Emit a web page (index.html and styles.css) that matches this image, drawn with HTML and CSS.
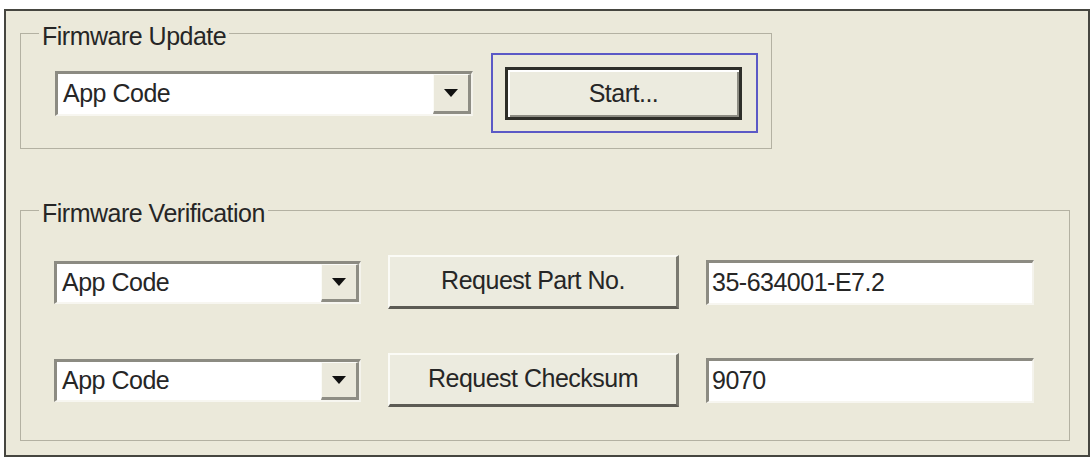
FILE: index.html
```html
<!DOCTYPE html>
<html lang="en">
  <head>
    <meta charset="UTF-8" />
    <meta name="viewport" content="width=device-width, initial-scale=1.0" />
    <title>Firmware</title>
    <link rel="stylesheet" href="styles.css">
  </head>
  <body>
    <div class="window">
      <fieldset class="group group-update">
        <legend>Firmware Update</legend>
        <div class="update-row">
          <div class="combo combo-wide">
            <span class="combo-value">App Code</span>
            <span class="combo-drop">
              <svg width="14" height="8" viewBox="0 0 14 8"><path d="M0 0h14L7 8z" fill="#111"/></svg>
            </span>
          </div>
          <div class="focus-ring">
            <button type="button" class="btn btn-default">Start...</button>
          </div>
        </div>
      </fieldset>

      <fieldset class="group group-verify">
        <legend>Firmware Verification</legend>
        <div class="verify-rows">
          <div class="verify-row">
            <div class="combo combo-small">
              <span class="combo-value">App Code</span>
              <span class="combo-drop">
                <svg width="14" height="8" viewBox="0 0 14 8"><path d="M0 0h14L7 8z" fill="#111"/></svg>
              </span>
            </div>
            <button type="button" class="btn btn-request">Request Part No.</button>
            <div class="field">35-634001-E7.2</div>
          </div>
          <div class="verify-row">
            <div class="combo combo-small">
              <span class="combo-value">App Code</span>
              <span class="combo-drop">
                <svg width="14" height="8" viewBox="0 0 14 8"><path d="M0 0h14L7 8z" fill="#111"/></svg>
              </span>
            </div>
            <button type="button" class="btn btn-request">Request Checksum</button>
            <div class="field">9070</div>
          </div>
        </div>
      </fieldset>
    </div>
  </body>
</html>
```

FILE: styles.css
```css
body {
  margin: 0;
  background-color: #ffffff;
  font-family: "Liberation Sans", Arial, sans-serif;
  font-size: 25px;
  letter-spacing: -0.5px;
  color: #262626;
}

.window {
  box-sizing: border-box;
  width: 1086px;
  height: 448px;
  margin: 9px 0 0 4px;
  border: 2px solid #464640;
  background-color: #ebe9da;
  overflow: hidden;
}

/* group boxes */
.group {
  margin: 0;
  padding: 0;
  min-width: 0;
  border: 1px solid #b3b1a2;
}

.group legend {
  margin-left: 18px;
  padding: 6px 3px 0 3px;
  line-height: 28px;
}

.group-update {
  box-sizing: border-box;
  width: 752px;
  margin: 5px 0 0 14px;
}

.group-verify {
  margin: 44px 18px 0 14px;
}

.update-row {
  display: flex;
  align-items: center;
  padding: 3px 0 15px 34px;
}

.verify-rows {
  display: flex;
  flex-direction: column;
  gap: 44px;
  padding: 28px 0 33px 33px;
}

.verify-row {
  display: flex;
  align-items: center;
  gap: 27px;
}

/* combo box */
.combo {
  box-sizing: border-box;
  display: flex;
  align-items: stretch;
  background-color: #ffffff;
  border-style: solid;
  border-width: 3px 2px 2px 3px;
  border-color: #8c8b82 #f4f3ec #f7f6f0 #8c8b82;
}

.combo-wide {
  width: 418px;
  height: 45px;
}

.combo-small {
  width: 307px;
  height: 43px;
}

.combo-value {
  flex: 1;
  display: flex;
  align-items: center;
  padding-left: 5px;
}

.combo-drop {
  box-sizing: border-box;
  width: 38px;
  display: flex;
  align-items: center;
  justify-content: center;
  background-color: #ebe9dc;
  border-style: solid;
  border-width: 1px 3px 3px 1px;
  border-color: #fbfbf7 #8e8d84 #8e8d84 #fbfbf7;
}

/* buttons */
.btn {
  box-sizing: border-box;
  font-family: "Liberation Sans", Arial, sans-serif;
  font-size: 25px;
  letter-spacing: -0.5px;
  color: #262626;
  background-color: #ecebdf;
  border-style: solid;
  border-width: 2px 3px 3px 2px;
  border-color: #fbfbf6 #7a7970 #5c5b54 #fbfbf6;
  padding: 0;
  cursor: pointer;
}

.btn-request {
  width: 291px;
  height: 54px;
  padding-bottom: 2px;
}

.focus-ring {
  box-sizing: border-box;
  width: 267px;
  height: 80px;
  margin-left: 18px;
  padding-left: 12px;
  display: flex;
  align-items: center;
  border: 2px solid #5b59c6;
}

.btn-default {
  width: 237px;
  height: 53px;
  border: 3px solid #2e2e29;
  box-shadow: inset 2px 2px 0 #ffffff, inset -2px -2px 0 #8d8c83;
}

/* text fields */
.field {
  box-sizing: border-box;
  width: 328px;
  height: 45px;
  display: flex;
  align-items: center;
  padding-left: 3px;
  background-color: #ffffff;
  border-style: solid;
  border-width: 3px 2px 2px 3px;
  border-color: #8c8b82 #f4f3ec #f7f6f0 #8c8b82;
}
```
